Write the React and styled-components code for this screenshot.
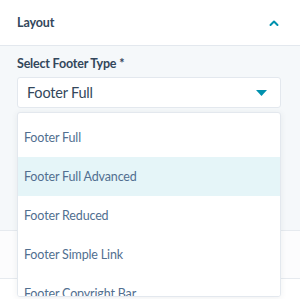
import React from "react";
import styled, { createGlobalStyle } from "styled-components";

const GlobalStyle = createGlobalStyle`
  body {
    margin: 0;
    background: #ffffff;
    font-family: Lato, "Open Sans", sans-serif;
  }
`;

const options = [
  "Footer Full",
  "Footer Full Advanced",
  "Footer Reduced",
  "Footer Simple Link",
  "Footer Copyright Bar",
];

function App() {
  return (
    <Page>
      <GlobalStyle />
      <Header>
        <Title>Layout</Title>
        <svg width="12" height="8" viewBox="0 0 12 8">
          <path
            d="M2.5 6 L6 2.5 L9.5 6"
            fill="none"
            stroke="#0091ae"
            strokeWidth="2"
            strokeLinecap="round"
            strokeLinejoin="round"
          />
        </svg>
      </Header>
      <Section>
        <Label>Select Footer Type *</Label>
        <SelectWrap>
          <SelectBox>
            <span>Footer Full</span>
            <svg width="11" height="6" viewBox="0 0 11 6">
              <path d="M0 0 H11 L5.5 6 Z" fill="#0091ae" />
            </svg>
          </SelectBox>
          <Dropdown>
            {options.map((o, i) => (
              <Option key={o} active={i === 1}>
                {o}
              </Option>
            ))}
          </Dropdown>
        </SelectWrap>
      </Section>
      <NextHeader />
      <Rest />
    </Page>
  );
}

export default App;

const Page = styled.div`
  width: 300px;
  height: 299px;
  overflow: hidden;
  background: #ffffff;
`;

const Header = styled.div`
  height: 45px;
  display: flex;
  align-items: center;
  justify-content: space-between;
  padding: 0 20px 0 17px;
  border-bottom: 1px solid #e3e8ee;
`;

const Title = styled.div`
  font-size: 12.5px;
  font-weight: 700;
  letter-spacing: -0.1px;
  color: #33475b;
`;

const Section = styled.div`
  height: 185px;
  box-sizing: border-box;
  background: #f5f8fa;
  padding: 9px 19px 0 17px;
  border-bottom: 1px solid #e6eaef;
`;

const Label = styled.div`
  font-size: 12.5px;
  font-weight: 700;
  letter-spacing: -0.2px;
  color: #33475b;
  line-height: 18px;
  margin-bottom: 4px;
`;

const SelectWrap = styled.div`
  position: relative;
`;

const SelectBox = styled.div`
  height: 31px;
  box-sizing: border-box;
  background: #ffffff;
  border: 1px solid #e3e8ee;
  border-radius: 3px;
  display: flex;
  align-items: center;
  justify-content: space-between;
  padding: 0 13px 0 9px;
  font-size: 14.5px;
  letter-spacing: -0.2px;
  color: #33475b;
`;

const Dropdown = styled.div`
  position: absolute;
  top: 35px;
  left: 0;
  right: 0;
  height: 185px;
  overflow: hidden;
  box-sizing: border-box;
  background: #ffffff;
  border: 1px solid #e3e8ee;
  border-radius: 3px;
  box-shadow: 0 1px 6px rgba(45, 62, 80, 0.08);
  padding-top: 5px;
  z-index: 2;
`;

const Option = styled.div`
  height: 39px;
  display: flex;
  align-items: center;
  padding-left: 6px;
  font-size: 12.5px;
  letter-spacing: -0.15px;
  color: #516f90;
  background: ${(p) => (p.active ? "#e5f5f8" : "#ffffff")};
`;

const NextHeader = styled.div`
  height: 47px;
  background: #fcfcfd;
  border-bottom: 1px solid #e6eaef;
`;

const Rest = styled.div`
  height: 30px;
  background: #ffffff;
`;
